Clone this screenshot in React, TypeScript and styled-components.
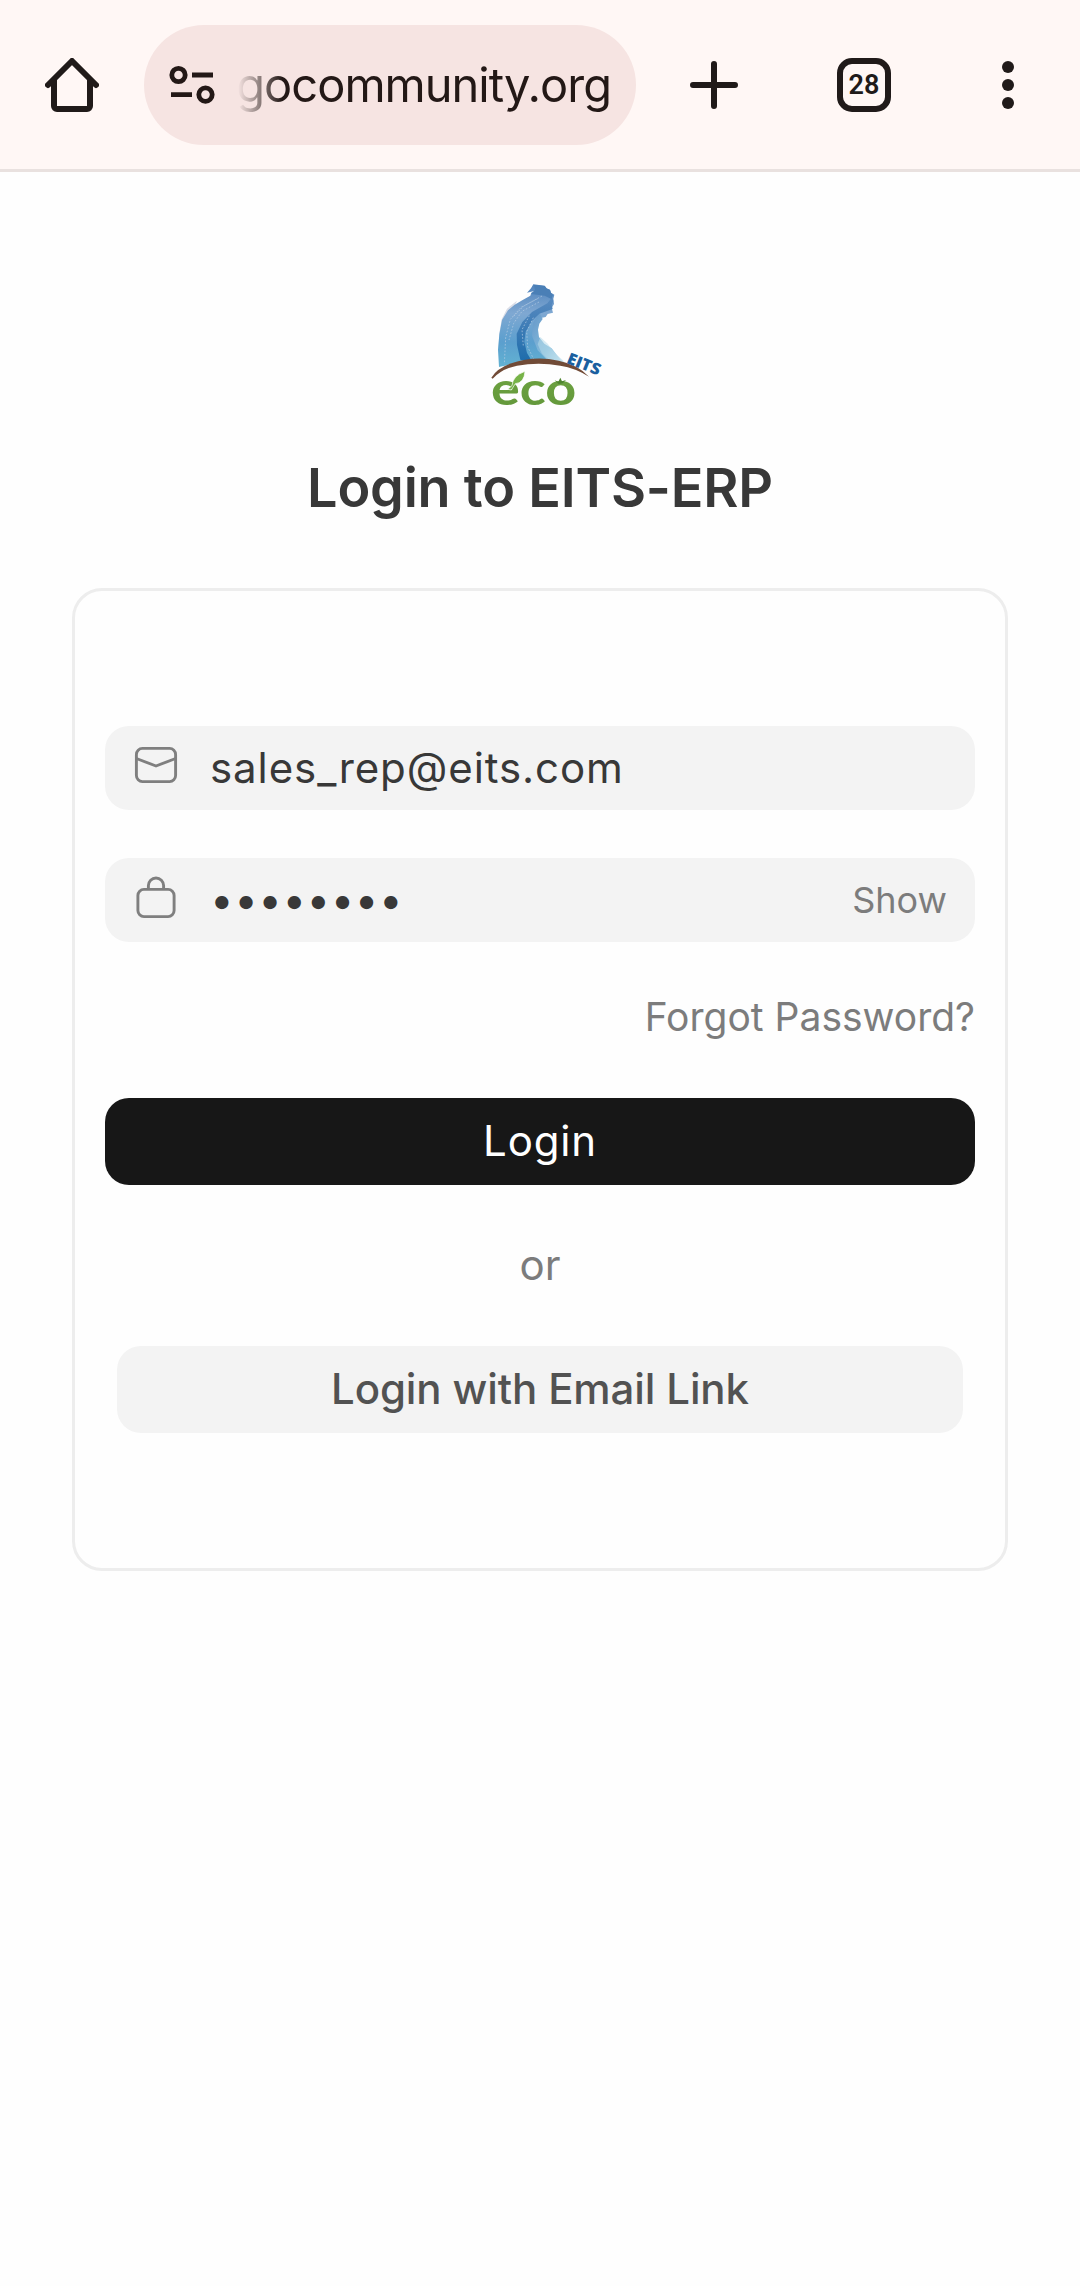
import React from "react";
import styled, { createGlobalStyle } from "styled-components";

const GlobalStyle = createGlobalStyle`
  *, *::before, *::after { box-sizing: border-box; }
  body { margin: 0; background: #fefefe; font-family: Inter, "Liberation Sans", sans-serif; }
`;

const Screen = styled.div`
  display: flex;
  flex-direction: column;
  min-height: 2286px;
  width: 1080px;
  background: #fefefe;
`;

const BrowserBar = styled.header`
  display: flex;
  align-items: center;
  height: 172px;
  background: #fff7f5;
  border-bottom: 3px solid #e9e1df;
`;

const BarButton = styled.button<{ $width: number }>`
  display: flex;
  align-items: center;
  justify-content: center;
  width: ${(p) => p.$width}px;
  height: 120px;
  margin: 0;
  padding: 0;
  border: 0;
  background: none;
  color: #201a19;
`;

const AddressPill = styled.div`
  display: flex;
  align-items: center;
  width: 492px;
  height: 120px;
  padding: 0 25px 0 24px;
  border-radius: 60px;
  background: #f6e4e2;
  color: #231816;
`;

const Url = styled.div`
  display: flex;
  flex: 1;
  justify-content: flex-end;
  margin-left: 18px;
  white-space: nowrap;
  font-size: 47px;
  line-height: 72px;
  letter-spacing: -0.98px;
  mask-image: linear-gradient(to right, transparent 4px, #000 48px);
`;

const TabCount = styled.span`
  display: flex;
  align-items: center;
  justify-content: center;
  width: 54px;
  height: 54px;
  border: 6px solid #201a19;
  border-radius: 15px;
  font: 600 27px/42px Roboto, sans-serif;
`;

const Main = styled.main`
  display: flex;
  flex-direction: column;
  align-items: center;
  padding: 98px 72px 0;
`;

const LogoFrame = styled.div`
  display: flex;
  margin-left: 10px;
`;

const Title = styled.h1`
  margin: 28px 0 0;
  font-size: 54px;
  line-height: 80px;
  font-weight: 600;
  letter-spacing: -0.2px;
  color: #383838;
`;

const Card = styled.form`
  display: flex;
  flex-direction: column;
  width: 936px;
  height: 983px;
  margin: 60px 0 0;
  padding: 135px 30px 0;
  border: 3px solid #ededed;
  border-radius: 30px;
`;

const Field = styled.label`
  display: flex;
  align-items: center;
  height: 84px;
  margin-bottom: 48px;
  padding: 0 28px 0 24px;
  border-radius: 24px;
  background: #f3f3f3;
`;

const FieldInput = styled.input`
  flex: 1;
  min-width: 0;
  height: 84px;
  margin: 0 0 0 27px;
  padding: 0;
  border: 0;
  outline: 0;
  background: none;
  color: #383838;
  font: 400 42px/84px Inter, sans-serif;
  letter-spacing: ${(p) => (p.type === "password" ? "0.5px" : "0.92px")};
`;

const ShowToggle = styled.span`
  font-size: 36px;
  line-height: 82px;
  color: #7c7c7c;
`;

const ForgotLink = styled.a`
  align-self: flex-end;
  font-size: 39px;
  line-height: 60px;
  color: #7c7c7c;
  margin-top: -3px;
`;

const ActionButton = styled.button<{ $primary?: boolean }>`
  height: 87px;
  padding: 0 0 2px;
  margin: ${(p) => (p.$primary ? "51px 0 0" : "0 12px")};
  border: 0;
  border-radius: 24px;
  background: ${(p) => (p.$primary ? "#171717" : "#f3f3f3")};
  color: ${(p) => (p.$primary ? "#ffffff" : "#525252")};
  font: ${(p) => (p.$primary ? 400 : 500)} 42px/85px Inter, sans-serif;
  letter-spacing: ${(p) => (p.$primary ? "0.84px" : "-0.12px")};
`;

const Divider = styled.p`
  margin: 47px 0 48px;
  text-align: center;
  font-size: 42px;
  line-height: 66px;
  color: #7c7c7c;
`;

const HomeIcon = () => (
  <svg width="54" height="54" viewBox="0 0 54 54" fill="none" stroke="currentColor" strokeWidth="6">
    <path d="M3 27 27 3l24 24" strokeLinecap="round" strokeLinejoin="round" />
    <path d="M9 21v27a3 3 0 0 0 3 3h30a3 3 0 0 0 3-3V21" />
  </svg>
);

const TuneIcon = () => (
  <svg width="48" height="42" viewBox="0 0 48 42" fill="none" stroke="currentColor" strokeWidth="4.8">
    <circle cx="10.5" cy="11" r="6.7" />
    <path d="M24 11h21M3 30.6h21" />
    <circle cx="37.5" cy="30.6" r="6.7" />
  </svg>
);

const PlusIcon = () => (
  <svg width="48" height="48" viewBox="0 0 48 48" stroke="currentColor" strokeWidth="6" strokeLinecap="round">
    <path d="M24 3v42M3 24h42" />
  </svg>
);

const MoreIcon = () => (
  <svg width="12" height="48" viewBox="0 0 12 48" fill="currentColor">
    <circle cx="6" cy="6" r="6" />
    <circle cx="6" cy="24" r="6" />
    <circle cx="6" cy="42" r="6" />
  </svg>
);

const MailIcon = () => (
  <svg width="54" height="54" viewBox="0 0 54 54" fill="none" stroke="#7f7f7f" strokeWidth="2.9">
    <rect x="7.4" y="7.4" width="39.2" height="33.2" rx="6" />
    <path d="M7.4 17.5 27 25l19.6-7.5" strokeLinejoin="round" />
  </svg>
);

const LockIcon = () => (
  <svg width="54" height="54" viewBox="0 0 54 54" fill="none" stroke="#7f7f7f" strokeWidth="2.9">
    <rect x="8.9" y="16.4" width="36.2" height="27.2" rx="6" />
    <path d="M19.4 16.5v-3.9a7.6 7.6 0 0 1 15.2 0v3.9" />
  </svg>
);

const Logo = () => (
  <svg width="150" height="150" viewBox="0 0 450 450">
    <defs>
      <linearGradient id="stream" x1="0" y1="0" x2="0" y2="1">
        <stop offset="0" stopColor="#4f82bb" />
        <stop offset=".35" stopColor="#7fa8d2" />
        <stop offset=".7" stopColor="#5b9fce" />
        <stop offset="1" stopColor="#62b2d2" />
      </linearGradient>
      <linearGradient id="band" x1="0" y1="0" x2="0" y2="1">
        <stop offset="0" stopColor="#5a8bc0" />
        <stop offset="1" stopColor="#1d6cab" />
      </linearGradient>
      <linearGradient id="spray" x1="0" y1="0" x2="1" y2="1">
        <stop offset="0" stopColor="#6596c8" />
        <stop offset=".6" stopColor="#86bedd" />
        <stop offset="1" stopColor="#d8edf5" />
      </linearGradient>
      <linearGradient id="leaf" x1="0" y1="0" x2="0" y2="1">
        <stop offset="0" stopColor="#72a743" />
        <stop offset="1" stopColor="#61963a" />
      </linearGradient>
    </defs>
    <path d="m141 92-30 24-16 32-7 42-2 40 5 40 10 20 20-12-4-100 10-55Z" fill="#dadde7" />
    <path d="m190 43 34 4 6 8 10 4 3 9 10 6-3 12 2 16-7 12 4 14-16 4-6 9-14 3-6 11-8 4-5 18 3 22 14 22 20 16 20 25 18 16-98-7-84 20-3-52 4-46 8-43 18-29 20-17 24-14 23-13 3-9 9-5-22 5 12-13Z" fill="url(#stream)" />
    <path d="m207 127-18 32-3 38 17 44 35 36 43 2-16-19-20-25-22-14-16-20-3-22 4-18 10-14Z" fill="url(#spray)" />
    <path d="m246 82-14 18-46 26-29 30-17 35 1 34 10 44 33 7 2-2-15-25-8-34 4-30 19-32 22-22 40-14-3-12 5-12Z" fill="url(#band)" />
    <path d="m192 45 32 3 6 8 10 4 3 9 6 6-5 12-20-10-40-5 11-13Z" fill="#4a7fb6" />
    <g fill="none" stroke="#b6cce3" strokeWidth="3" strokeDasharray="5 5" opacity=".7">
      <path d="M203 86 153 112l-32 36-14 54-4 80M207 96l-51 28-25 36-14 50" />
      <path d="m190 143-20 42 3 46 18 36M178 137l-22 42 4 50" />
      <path d="m216 78-56 31-33 34" />
    </g>
    <path d="m211 201 22 20 22 29 23 20 7 10-40-4-29-25-13-28Z" fill="#b6dbe9" opacity=".55" />
    <path d="M64 323q17-28 60-43 68-24 142-8 58 12 91 48-41-26-86-33-65-12-130 0-44 9-73 39Z" fill="#714b37" />
    <text x="63" y="404" textLength="256" lengthAdjust="spacingAndGlyphs" fontFamily="Lato, sans-serif" fontWeight="700" fontSize="140" fill="url(#leaf)">eco</text>
    <path d="M126 347q2-30 39-43-2 35-29 37l-12 19-11-2Z" fill="#77b348" stroke="#fff" strokeWidth="2" />
    <path d="m254 331 11 4 6-12 5 11 12-4-10 10-12 2Z" fill="#4f852f" />
    <text transform="translate(287 278) rotate(22)" textLength="105" lengthAdjust="spacingAndGlyphs" fontFamily="'Open Sans', sans-serif" fontWeight="800" fontSize="48" fill="#1a5f9f">EITS</text>
  </svg>
);

export default function App() {
  return (
    <Screen>
      <GlobalStyle />
      <BrowserBar>
        <BarButton $width={144} aria-label="Home"><HomeIcon /></BarButton>
        <AddressPill>
          <TuneIcon />
          <Url>gocommunity.org</Url>
        </AddressPill>
        <BarButton $width={156} aria-label="New tab"><PlusIcon /></BarButton>
        <BarButton $width={144} aria-label="Tabs"><TabCount>28</TabCount></BarButton>
        <BarButton $width={144} aria-label="More"><MoreIcon /></BarButton>
      </BrowserBar>
      <Main>
        <LogoFrame><Logo /></LogoFrame>
        <Title>Login to EITS-ERP</Title>
        <Card>
          <Field>
            <MailIcon />
            <FieldInput type="text" defaultValue="sales_rep@eits.com" />
          </Field>
          <Field>
            <LockIcon />
            <FieldInput type="password" defaultValue="password" />
            <ShowToggle>Show</ShowToggle>
          </Field>
          <ForgotLink>Forgot Password?</ForgotLink>
          <ActionButton type="button" $primary>Login</ActionButton>
          <Divider>or</Divider>
          <ActionButton type="button">Login with Email Link</ActionButton>
        </Card>
      </Main>
    </Screen>
  );
}
